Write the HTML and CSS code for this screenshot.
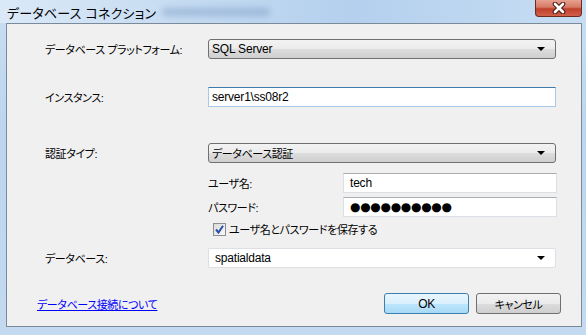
FILE: index.html
```html
<!DOCTYPE html>
<html lang="ja">
<head>
    <meta charset="UTF-8">
    <title>データベース コネクション</title>
    <link rel="stylesheet" href="styles.css">
</head>
<body>
    <div class="window">
        <!-- Title bar -->
        <div class="titlebar">
            <span class="title">データベース コネクション</span>
            <div class="close-btn">
                <svg width="16" height="12" viewBox="0 0 16 12">
                    <path d="M4 2 L12 10 M12 2 L4 10" stroke="#4a1a12" stroke-width="4.6" stroke-linecap="round"/>
                    <path d="M4 2 L12 10 M12 2 L4 10" stroke="#ffffff" stroke-width="2.6" stroke-linecap="round"/>
                </svg>
            </div>
        </div>

        <!-- Client area -->
        <div class="client">
            <div class="row row-platform">
                <label class="label">データベース プラットフォーム:</label>
                <div class="combo">
                    <span class="latin">SQL Server</span>
                    <span class="arrow"></span>
                </div>
            </div>

            <div class="row row-instance">
                <label class="label">インスタンス:</label>
                <div class="textbox focused latin">server1\ss08r2</div>
            </div>

            <div class="row row-auth">
                <label class="label">認証タイプ:</label>
                <div class="combo">
                    <span>データベース認証</span>
                    <span class="arrow"></span>
                </div>
            </div>

            <!-- Credentials -->
            <div class="credentials">
                <div class="sub-row">
                    <label class="sub-label">ユーザ名:</label>
                    <div class="textbox latin">tech</div>
                </div>
                <div class="sub-row sub-password">
                    <label class="sub-label">パスワード:</label>
                    <div class="textbox password">●●●●●●●●●●</div>
                </div>
                <div class="check-row">
                    <span class="checkbox">
                        <svg width="9" height="9" viewBox="0 0 9 9">
                            <path d="M1 4.5 L3.5 7.5 L8 0.8" fill="none" stroke="#2a4fa8" stroke-width="2"/>
                        </svg>
                    </span>
                    <span>ユーザ名とパスワードを保存する</span>
                </div>
            </div>

            <div class="row row-database">
                <label class="label">データベース:</label>
                <div class="combo editable">
                    <span class="latin">spatialdata</span>
                    <span class="arrow"></span>
                </div>
            </div>

            <!-- Footer -->
            <div class="footer">
                <a href="#" class="help-link">データベース接続について</a>
                <div class="buttons">
                    <button class="btn default latin">OK</button>
                    <button class="btn">キャンセル</button>
                </div>
            </div>
        </div>
    </div>
</body>
</html>
```

FILE: styles.css
```css
/* Page and window frame */
body {
    margin: 0;
    font-family: "Liberation Sans", "Noto Sans CJK JP", sans-serif;
    font-size: 11px;
    letter-spacing: -0.4px;
    font-feature-settings: "palt";
    color: #000;
}

/* Latin values are drawn a bit larger than the Japanese labels */
.latin {
    font-size: 12px;
    letter-spacing: -0.2px;
}

.window {
    width: 586px;
    height: 335px;
    box-sizing: border-box;
    padding: 0 4px 8px 6px;
    display: flex;
    flex-direction: column;
    background: linear-gradient(180deg, #c9def2 0%, #bcd6ef 40%, #c3daf0 100%);
}

/* Title bar */
.titlebar {
    position: relative;
    height: 23px;
    display: flex;
    align-items: flex-start;
    justify-content: space-between;
    margin-left: -6px;
    margin-right: -4px;
    padding-left: 7px;
    padding-right: 4px;
    background: linear-gradient(90deg, #dbe9f7 0%, #c6dcf2 30%, #b4d0ee 60%, #c7ddf3 100%);
}

/* blurred glass behind the title */
.titlebar::after {
    content: "";
    position: absolute;
    left: 162px;
    top: 8px;
    width: 108px;
    height: 8px;
    border-radius: 4px;
    background: rgba(110, 140, 185, 0.4);
    filter: blur(3px);
}

.title {
    margin-top: 3px;
    font-size: 13px;
    letter-spacing: 0.2px;
}

.close-btn {
    width: 45px;
    height: 16px;
    border: 1px solid #6d2a20;
    border-top: none;
    border-radius: 0 0 4px 4px;
    background: linear-gradient(180deg, #e8a08f 0%, #d67a66 45%, #c0412c 55%, #d0604a 100%);
    display: flex;
    align-items: center;
    justify-content: center;
}

/* Client area */
.client {
    flex: 1;
    border: 1px solid #7b8a99;
    background: #f0f0f0;
    display: flex;
    flex-direction: column;
}

.row {
    display: flex;
    align-items: center;
    padding-left: 38px;
}

.label {
    width: 163px;
}

.row-platform { margin-top: 15px; }
.row-instance { margin-top: 28px; }
.row-auth { margin-top: 36px; }
.row-database { margin-top: 12px; }

/* Combo boxes */
.combo {
    width: 348px;
    height: 20px;
    box-sizing: border-box;
    border: 1px solid #707070;
    border-radius: 3px;
    padding: 0 10px 0 3px;
    display: flex;
    align-items: center;
    justify-content: space-between;
    background: linear-gradient(180deg, #f3f3f3 0%, #ebebeb 50%, #dddddd 51%, #cfcfcf 100%);
}

.combo.editable {
    border: 1px solid #dcdfe4;
    border-radius: 2px;
    background: #fff;
    padding-left: 6px;
}

.arrow {
    width: 0;
    height: 0;
    border-left: 4px solid transparent;
    border-right: 4px solid transparent;
    border-top: 4px solid #000;
}

/* Text boxes */
.textbox {
    width: 348px;
    height: 20px;
    box-sizing: border-box;
    border: 1px solid #dbdfe6;
    border-top-color: #abadb3;
    background: #fff;
    padding-left: 3px;
    display: flex;
    align-items: center;
}

.textbox.focused {
    border-color: #a9c7e6;
    border-top-color: #3d7bad;
}

/* Credentials block */
.credentials {
    margin-top: 10px;
    padding-left: 201px;
    display: flex;
    flex-direction: column;
}

.sub-row {
    display: flex;
    align-items: center;
}

.sub-password {
    margin-top: 4px;
}

.sub-label {
    width: 135px;
}

.sub-row .textbox {
    width: 214px;
    padding-left: 6px;
}

.textbox.password {
    font-family: "DejaVu Sans", sans-serif;
    font-size: 12px;
    letter-spacing: -0.3px;
}

.check-row {
    margin-top: 5px;
    padding-left: 5px;
    height: 14px;
    display: flex;
    align-items: center;
    gap: 3px;
}

.checkbox {
    width: 11px;
    height: 11px;
    border: 1px solid #8f8f8f;
    background: linear-gradient(135deg, #dcdcdc, #f8f8f8);
    display: flex;
    align-items: center;
    justify-content: center;
}

/* Footer */
.footer {
    margin-top: 25px;
    padding-left: 30px;
    padding-right: 20px;
    display: flex;
    align-items: center;
    justify-content: space-between;
}

.help-link {
    color: #0000ff;
    text-decoration: underline;
}

.buttons {
    display: flex;
    gap: 7px;
}

.btn {
    width: 85px;
    height: 21px;
    font-family: inherit;
    font-size: 11px;
    letter-spacing: inherit;
    font-feature-settings: "palt";
    color: #000;
    border: 1px solid #707070;
    border-radius: 3px;
    background: linear-gradient(180deg, #f2f2f2 0%, #ebebeb 50%, #dddddd 51%, #cfcfcf 100%);
    padding: 0;
}

.btn.latin {
    font-size: 12px;
}

.btn.default {
    border-color: #3c7fb1;
    background: linear-gradient(180deg, #eaf6fd 0%, #d9f0fc 50%, #bee6fd 51%, #a7d9f5 100%);
}
```
